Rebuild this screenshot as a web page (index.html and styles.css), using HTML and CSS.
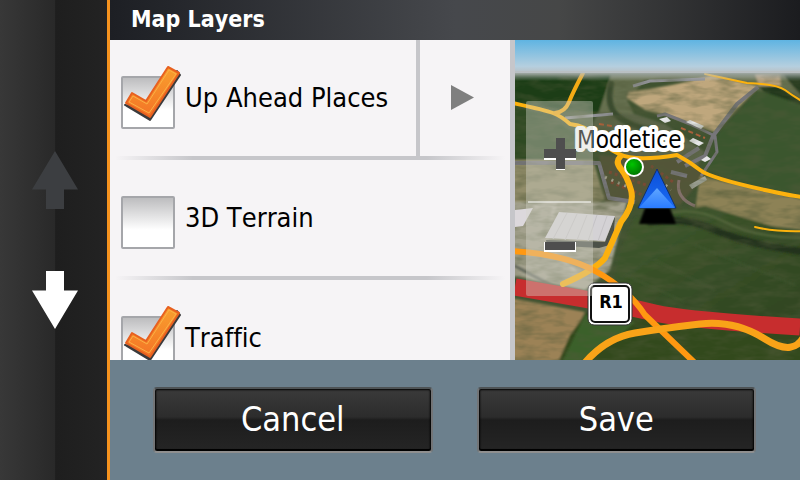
FILE: index.html
```
<!DOCTYPE html>
<html lang="en">
<head>
  <meta charset="UTF-8">
  <meta name="viewport" content="width=device-width, initial-scale=1.0">
  <title>Map Layers</title>
  <link rel="stylesheet" href="styles.css">
</head>
<body>
  <nav class="scroll-bar" aria-label="Scroll list">
    <button type="button" class="scroll-btn" aria-label="Scroll up" disabled>
      <svg viewBox="0 0 46 58"><path d="M23 0 46 38.500H32V58H14V38.500H0Z"/></svg>
    </button>
    <button type="button" class="scroll-btn" aria-label="Scroll down">
      <svg viewBox="0 0 46 58"><path d="M14 0H32V19.500H46L23 58 0 19.500H14Z"/></svg>
    </button>
  </nav>

  <div class="screen">
    <header class="title-bar">
      <h1>Map Layers</h1>
    </header>

    <main class="content">
      <!-- gradients shared by the tick icons -->
      <svg class="defs" aria-hidden="true">
        <defs>
          <linearGradient id="tick" x1="0" y1="0" x2="0" y2="1">
            <stop offset="0" stop-color="#f8a02e"/>
            <stop offset="1" stop-color="#f47326"/>
          </linearGradient>
          <symbol id="tick-icon" viewBox="0 0 60 58">
            <path d="M3 40 28 55 58 10 55 6 26 44Z" fill="#3b3b3d" stroke="#3b3b3d" stroke-width="2" stroke-linejoin="round"/>
            <path d="M46 2 57 8 28 52 4 38 10 28 24 36Z" fill="url(#tick)" stroke="#e8601f" stroke-width="2" stroke-linejoin="round"/>
            <path d="M47 5 54 9 27 48 7 37 11 31 25 39Z" fill="none" stroke="#fcb045" stroke-width="1"/>
          </symbol>
        </defs>
      </svg>

      <ul class="layers">
        <li class="layer">
          <label class="layer-label">
            <span class="check">
              <input type="checkbox" checked>
              <svg class="tick" aria-hidden="true"><use href="#tick-icon"/></svg>
            </span>
            Up Ahead Places
          </label>
          <button type="button" class="more" aria-label="Up Ahead Places options">
            <svg viewBox="0 0 23 25"><path d="M0 0 23 12.500 0 25Z"/></svg>
          </button>
        </li>
        <li class="layer">
          <label class="layer-label">
            <span class="check">
              <input type="checkbox">
              <svg class="tick" aria-hidden="true"><use href="#tick-icon"/></svg>
            </span>
            3D Terrain
          </label>
        </li>
        <li class="layer">
          <label class="layer-label">
            <span class="check">
              <input type="checkbox" checked>
              <svg class="tick" aria-hidden="true"><use href="#tick-icon"/></svg>
            </span>
            Traffic
          </label>
        </li>
      </ul>

      <section class="map" aria-label="Map preview">
        <svg class="map-view" viewBox="0 0 285 320" preserveAspectRatio="xMinYMin slice">
          <defs>
            <linearGradient id="sky" x1="0" y1="0" x2="0" y2="1">
              <stop offset="0" stop-color="#5fb4e2"/>
              <stop offset="0.800" stop-color="#b5cfdf"/>
              <stop offset="1" stop-color="#b9bfc2"/>
            </linearGradient>
            <linearGradient id="haze" x1="0" y1="0" x2="0" y2="1">
              <stop offset="0" stop-color="#b9bfc2"/>
              <stop offset="1" stop-color="#b9bfc2" stop-opacity="0"/>
            </linearGradient>
            <linearGradient id="field" x1="0" y1="0" x2="1" y2="1">
              <stop offset="0" stop-color="#3f582d"/>
              <stop offset="1" stop-color="#2e4420"/>
            </linearGradient>
            <linearGradient id="car" x1="0" y1="0" x2="0" y2="1">
              <stop offset="0" stop-color="#0c4fd8"/>
              <stop offset="1" stop-color="#1a6cf5"/>
            </linearGradient>
            <linearGradient id="car-front" x1="0" y1="0" x2="0" y2="1">
              <stop offset="0" stop-color="#5fa6ff"/>
              <stop offset="1" stop-color="#2a7cff"/>
            </linearGradient>
            <radialGradient id="town" cx="0.400" cy="0.350" r="0.700">
              <stop offset="0" stop-color="#00c400"/>
              <stop offset="1" stop-color="#006e00"/>
            </radialGradient>
            <filter id="soft"><feGaussianBlur stdDeviation="1"/></filter>
            <!-- uneven ground -->
            <filter id="ground" x="0" y="0" width="1" height="1">
              <feTurbulence type="fractalNoise" baseFrequency="0.040 0.120" numOctaves="3" seed="4"/>
              <feColorMatrix values="0 0 0 0 0.080  0 0 0 0 0.100  0 0 0 0 0.040  1.200 0 0 0 -0.480"/>
            </filter>
          </defs>

          <rect width="285" height="320" fill="#3f5230"/>
          <!-- fields -->
          <g filter="url(#soft)">
            <path d="M-5 35H96L84 72 50 70 0 62Z" fill="#1c3d14"/>
            <path d="M-5 66 40 76 50 88 70 96 60 120H-5Z" fill="#2f4a24"/>
            <path d="M96 35H290V60L230 48 190 40 130 40 112 60 120 76 100 84 84 72Z" fill="#66704f"/>
            <path d="M84 72 120 74 150 84 190 112 180 130 110 118 70 96Z" fill="#5c6549"/>
            <path d="M114 52Q160 46 198 35L243 47 200 92 150 75 130 70 112 58Z" fill="#bfa77d"/>
            <path d="M240 34H265L266 46H244Z" fill="#b39d79"/>
            <path d="M266 32H290V62L262 46 244 47 250 53 290 68V60Z" fill="#24391b"/>
            <path d="M243 50 290 66V156L240 146 186 128 205 92Z" fill="#3a572e"/>
            <path d="M-5 120 78 120 90 160 60 170-5 165Z" fill="#918c69"/>
            <path d="M84 115 130 118 165 118 190 135 165 165 90 162Z" fill="#525539"/>
            <path d="M185 136 290 160V190L220 182 180 170Z" fill="#8d8257"/>
            <path d="M-5 162H112L95 230 70 250-5 236Z" fill="#a3a18d"/>
            <path d="M120 178 190 166 290 196V290L95 258 104 215Z" fill="url(#field)"/>
            <path d="M-5 258 70 272 55 300 44 325H-5Z" fill="#9c8257"/>
            <path d="M72 272 290 290V325H42L55 295Z" fill="#33491f"/>
            <path d="M70 275 120 282 100 300 60 325H46Z" fill="#3a6129"/>
          </g>
          <!-- tracks and hedges -->
          <g fill="none" stroke-linecap="round" filter="url(#soft)">
            <path d="M135 182Q170 176 200 190T290 212" stroke="#22331a" stroke-width="7"/>
            <path d="M150 174Q180 166 210 182T290 198" stroke="#57693e" stroke-width="2"/>
            <path d="M96 44Q90 70 108 80T140 90" stroke="#3b4c2e" stroke-width="6"/>
            <path d="M140 220 200 250M180 205 280 245M110 235 170 262" stroke="#435a34" stroke-width="1"/>
            <path d="M0 226 60 258M5 240 40 256" stroke="#5e6458" stroke-width="3"/>
            <path d="M20 166 40 164 32 200M34 210 60 230" stroke="#b5b1a0" stroke-width="4"/>
          </g>
          <g fill="none" stroke="#77767a" stroke-width="3" stroke-linejoin="round">
            <path d="M243 47 222 64 198 96 190 116 170 126M0 123H84L94 158 120 162" stroke-width="4"/>
            <path d="M142 76 150 74 175 84 200 96 202 112 186 136"/>
            <path d="M162 122 184 108M156 132 172 136" stroke-width="4"/>
            <path d="M50 78 98 74M118 46 135 41 190 39" stroke="#8f9094"/>
            <path d="M164 140Q160 158 180 166" stroke="#82706a"/>
          </g>
          <!-- houses -->
          <g fill="none" stroke-width="3">
            <path d="M94 132 134 146M96 142 130 156M136 126 158 142M140 146 154 154" stroke="#7a4a34" stroke-dasharray="3 3"/>
            <path d="M90 137 120 150M110 128 128 134M140 136 156 150" stroke="#a29f8c" stroke-dasharray="2 5"/>
            <path d="M166 88 190 98M84 84 110 88" stroke="#b0603a" stroke-width="2" stroke-dasharray="5 3"/>
          </g>
          <g fill="#e6e6e8">
            <path d="M171 82 175 80 189 86 186 89Z"/>
            <path d="M174 101 178 98 189 103 184 106Z"/>
            <path d="M144 79 152 77 156 81 150 83Z"/>
            <path d="M186 120 192 116 196 119 190 122Z"/>
            <path d="M174 145 190 136 192 140 177 149Z" fill="#a6a9a0"/>
          </g>
          <rect width="285" height="320" filter="url(#ground)"/>
          <!-- warehouses -->
          <path d="M31 200 90 202 100 176 98 204 84 208 32 205Z" fill="#4c5148"/>
          <path d="M44 172 100 176 90 201 30 198Z" fill="#d4d2d5"/>
          <path d="M52 173 38 199M62 174 50 200M72 175 62 200M82 175 73 201M92 176 83 201" stroke="#c4c2c5" fill="none"/>
          <path d="M0 170 18 168 8 186 0 187Z" fill="#dcd8dc"/>

          <!-- roads -->
          <g fill="none" stroke-linecap="round" stroke-linejoin="round">
            <path d="M0 247Q40 254 75 260T140 273 285 287" stroke="#c72d2e" stroke-width="17" stroke-linecap="butt"/>
            <path d="M-2 63Q30 70 38 73T55 84Q72 86 80 96T104 114 162 115Q175 122 185 130T250 150 290 154" stroke="#fdb20d" stroke-width="4"/>
            <path d="M68 33Q58 52 54 62T40 73" stroke="#f3ab15" stroke-width="4"/>
            <path d="M190 34 232 43Q262 44 270 50T290 63" stroke="#fdb20d" stroke-width="2"/>
            <path d="M240 187Q260 192 290 191" stroke="#fdb20d" stroke-width="2"/>
            <path d="M105 117Q100 122 106 129T116 150 106 182L90 218Q80 230 48 244" stroke="#fbb00e" stroke-width="6"/>
            <path d="M-4 211Q50 214 82 232T130 275L182 325" stroke="#ff9811" stroke-width="6"/>
            <path d="M68 325Q90 298 120 293T185 284 250 299 290 294" stroke="#f9a318" stroke-width="7"/>
          </g>

          <rect width="285" height="33" fill="url(#sky)"/>
          <rect y="31" width="285" height="10" fill="url(#haze)"/>

          <path d="M130 168H155L161 184H124Z" fill="#000" filter="url(#soft)"/>
          <path d="M142 129 161 168H123Z" fill="url(#car)" stroke="#10306e"/>
          <path d="M142 148 160 168H124Z" fill="url(#car-front)"/>
          <circle cx="119" cy="127" r="9" fill="url(#town)" stroke="#fff" stroke-width="2"/>
          <text class="place" x="62" y="108">Modletice</text>
          <rect x="73" y="243" width="44" height="42" rx="6" fill="#fff" stroke="#333"/>
          <rect x="76" y="246" width="38" height="36" rx="4" fill="#fff" stroke="#111" stroke-width="2"/>
          <text class="road" x="96" y="268">R1</text>
        </svg>

        <div class="zoom">
          <button type="button" aria-label="Zoom in">
            <svg viewBox="0 0 32 32"><path class="shine" d="M12 2H21V12H32V22H21V32H12V22H0V12H12Z"/><path d="M12 0H21V11H32V20H21V31H12V20H0V11H12Z"/></svg>
          </button>
          <button type="button" aria-label="Zoom out">
            <svg viewBox="0 0 32 32"><path class="shine" d="M0 12H32V22H0Z"/><path d="M1 12H31V20H1Z"/></svg>
          </button>
        </div>
      </section>
    </main>

    <footer class="actions">
      <button type="button" class="btn">Cancel</button>
      <button type="button" class="btn">Save</button>
    </footer>
  </div>
</body>
</html>
```

FILE: styles.css
```
:root {
  --accent: #f7931e;
  --panel: #f6f4f6;
  --line: #c6c6ca;
  --slate: #6c808d;
}

* {
  margin: 0;
  padding: 0;
  box-sizing: border-box;
}

body {
  display: flex;
  height: 100vh;
  overflow: hidden;
  font-family: "DejaVu Sans Condensed", "DejaVu Sans", sans-serif;
  font-kerning: none;
  font-variant-ligatures: none;
  color: #000;
  background: #222;
}

button {
  border: 0;
  background: none;
  font: inherit;
  font-kerning: inherit;
  cursor: pointer;
}

svg {
  display: block;
}

.scroll-bar {
  flex: 0 0 110px;
  display: flex;
  flex-direction: column;
  align-items: center;
  justify-content: center;
  gap: 62px;
  padding-left: 3px;
  border-right: 3px solid var(--accent);
  background: linear-gradient(90deg, #383838, #292929 51%, #1e1e1e 52%, #232323);
}

.scroll-btn svg {
  width: 46px;
  height: 58px;
  fill: #fff;
}

.scroll-btn:disabled svg {
  fill: #3c3e41;
}

.screen {
  flex: 1;
  display: flex;
  flex-direction: column;
  min-width: 0;
}

.title-bar {
  flex: 0 0 40px;
  padding: 0 21px;
  background: linear-gradient(90deg, #1d1f24, #46484c 50%, #464747 65%, #1b1c1f);
  color: #fff;
}

.title-bar h1 {
  font-size: 23px;
  line-height: 38px;
}

.content {
  flex: 1;
  display: flex;
  min-height: 0;
}

.defs {
  position: absolute;
  width: 0;
  height: 0;
}

.layers {
  flex: 0 0 58%;
  list-style: none;
  overflow: hidden;
  background: var(--panel);
}

.layer {
  display: flex;
  height: 120px;
  padding: 0 5px;
  background: linear-gradient(90deg, transparent, var(--line) 20%, var(--line) 80%, transparent) bottom / calc(100% - 10px) 4px no-repeat;
}

.layer-label {
  flex: 1;
  display: flex;
  align-items: center;
  gap: 10px;
  padding: 0 0 6px 6px;
  font-size: 27px;
}

.check {
  position: relative;
  margin-top: 11px;
}

.check input {
  display: block;
  appearance: none;
  width: 54px;
  height: 53px;
  border: 2px solid #a5a6aa;
  border-radius: 2px;
  background: linear-gradient(#bdbdbf, #fff 65%);
}

.tick {
  position: absolute;
  left: 1px;
  bottom: 6px;
  width: 60px;
  height: 58px;
  visibility: hidden;
  pointer-events: none;
}

.check input:checked + .tick {
  visibility: visible;
}

.more {
  flex: 0 0 89px;
  margin-bottom: 4px;
  padding-bottom: 2px;
  border-left: 4px solid var(--line);
}

.more svg {
  width: 23px;
  height: 25px;
  margin: 0 auto;
  fill: #7f7f7f;
}

.map {
  position: relative;
  flex: 1;
  min-width: 0;
  border-left: 5px solid var(--line);
}

.map-view {
  width: 100%;
  height: 100%;
}

.place {
  font-size: 24px;
  stroke: #fff;
  stroke-width: 8px;
  stroke-linejoin: round;
  paint-order: stroke;
}

.road {
  font-size: 18px;
  font-weight: bold;
  text-anchor: middle;
}

.zoom {
  position: absolute;
  top: 61px;
  left: 11px;
  width: 67px;
  padding: 5px 2px 0;
  border-radius: 2px;
  background: rgba(215, 215, 205, 0.4);
}

.zoom button {
  display: block;
  width: 100%;
  height: 95px;
}

.zoom button + button {
  border-top: 2px solid rgba(255, 255, 255, 0.5);
  padding-bottom: 8px;
}

.zoom svg {
  width: 32px;
  height: 32px;
  margin: 0 auto;
  fill: #4e4e4e;
}

.zoom .shine {
  fill: #fff;
}

.actions {
  flex: 0 0 120px;
  display: flex;
  align-items: center;
  gap: 44px;
  padding: 0 44px 0 43px;
  background: var(--slate);
}

.btn {
  flex: 1;
  height: 66px;
  padding-bottom: 2px;
  border: 2px solid;
  border-color: #4e5355 #737577 #8f8f8f;
  border-radius: 4px;
  box-shadow: inset 0 -2px #000, inset 0 0 2px 1px #000;
  background: linear-gradient(#3a3a3a, #2c2c2c 45%, #1d1d1d 50%, #252525);
  color: #fff;
  font-size: 34px;
}
```
